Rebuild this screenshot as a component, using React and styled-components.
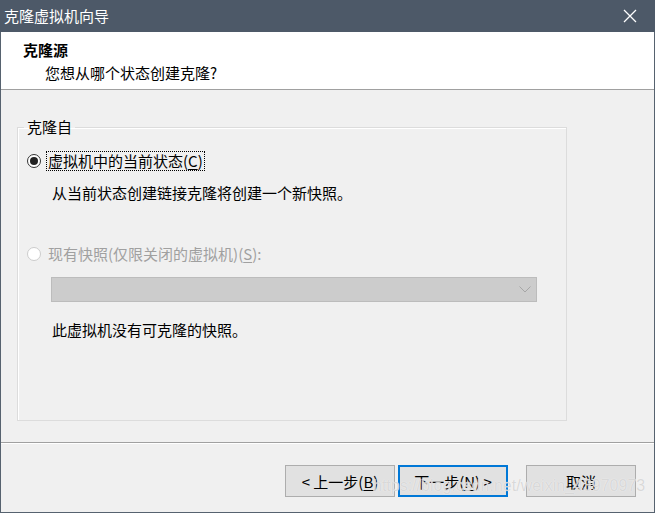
import React from "react"
import styled, { createGlobalStyle } from "styled-components"

const GlobalStyle = createGlobalStyle`
    html, body {
        margin: 0;
        padding: 0;
        background: #f0f0f0;
    }
    * {
        box-sizing: border-box;
    }
`

const CloneWizard = () => {
    return (
        <Window>
            <GlobalStyle />
            <TitleBar>
                <span>克隆虚拟机向导</span>
                <Close>
                    <svg width="14" height="14" viewBox="0 0 14 14">
                        <path d="M1 1 L13 13 M13 1 L1 13" stroke="#fff" strokeWidth="1.3" />
                    </svg>
                </Close>
            </TitleBar>
            <Header>
                <HeaderTitle>克隆源</HeaderTitle>
                <HeaderSub>您想从哪个状态创建克隆?</HeaderSub>
            </Header>
            <Body>
                <GroupBox>
                    <Legend>克隆自</Legend>
                    <RadioRow $top={14}>
                        <Radio $checked />
                        <RadioLabel $focused>
                            虚拟机中的当前状态(<u>C</u>)
                        </RadioLabel>
                    </RadioRow>
                    <Note $top={12}>从当前状态创建链接克隆将创建一个新快照。</Note>
                    <RadioRow $top={41}>
                        <Radio $disabled />
                        <RadioLabel $disabled>
                            现有快照(仅限关闭的虚拟机)(<u>S</u>):
                        </RadioLabel>
                    </RadioRow>
                    <Select>
                        <svg width="12" height="7" viewBox="0 0 12 7">
                            <path d="M0.5 0.5 L6 6 L11.5 0.5" stroke="#a6a6a6" strokeWidth="1" fill="none" />
                        </svg>
                    </Select>
                    <Note $top={18}>此虚拟机没有可克隆的快照。</Note>
                </GroupBox>
            </Body>
            <Footer>
                <Buttons>
                    <Button>&lt; 上一步(<u>B</u>)</Button>
                    <Button $primary>下一步(<u>N</u>) &gt;</Button>
                    <Button $gap={15}>取消</Button>
                </Buttons>
                <Watermark>https://blog.csdn.net/weixin_43970973</Watermark>
            </Footer>
        </Window>
    )
}
export default CloneWizard

const Window = styled.div`
    width: 100%;
    height: 100vh;
    display: flex;
    flex-direction: column;
    border: 1px solid #56626f;
    border-top: none;
    background: #f0f0f0;
    font-family: "Noto Sans CJK SC", "Liberation Sans", sans-serif;
    font-size: 15px;
    color: #000;
`
const TitleBar = styled.div`
    height: 32px;
    flex-shrink: 0;
    margin: 0 -1px;
    background: #4d5968;
    color: #fff;
    font-size: 15px;
    display: flex;
    align-items: center;
    justify-content: space-between;
    padding-left: 4px;

    span {
        position: relative;
        top: -1px;
    }
`
const Close = styled.div`
    width: 46px;
    height: 32px;
    display: flex;
    align-items: center;
    justify-content: center;
    margin-right: 2px;
`
const Header = styled.div`
    height: 58px;
    flex-shrink: 0;
    background: #fff;
    border-bottom: 1px solid #a0a0a0;
    padding: 8px 0 0 22px;
    display: flex;
    flex-direction: column;
`
const HeaderTitle = styled.div`
    font-weight: bold;
    font-size: 15px;
    line-height: 20px;
`
const HeaderSub = styled.div`
    margin-left: 22px;
    line-height: 20px;
    margin-top: 3px;
`
const Body = styled.div`
    flex: 1;
    padding: 27px 0 21px 16px;
    display: flex;
`
const GroupBox = styled.fieldset`
    margin: 0;
    width: 550px;
    padding: 0 9px;
    border: 1px solid #dcdcdc;
    box-shadow: inset 1px 1px 0 #fff;
    display: flex;
    flex-direction: column;
    min-width: 0;
`
const Legend = styled.legend`
    padding: 0 3px;
    margin-left: -3px;
    line-height: 20px;
    color: #000;
`
const RadioRow = styled.div`
    margin-top: ${p => p.$top}px;
    display: flex;
    align-items: center;
    height: 20px;
`
const Radio = styled.span`
    width: 14px;
    height: 14px;
    border-radius: 50%;
    border: 1px solid ${p => (p.$disabled ? "#cccccc" : "#333")};
    background: #fff;
    position: relative;
    flex-shrink: 0;

    &::after {
        content: "";
        display: ${p => (p.$checked ? "block" : "none")};
        position: absolute;
        left: 2px;
        top: 2px;
        width: 8px;
        height: 8px;
        border-radius: 50%;
        background: #222;
    }
`
const RadioLabel = styled.span`
    margin-left: 5px;
    padding: 0 1px;
    line-height: 18px;
    border: 1px dotted ${p => (p.$focused ? "#000" : "transparent")};
    color: ${p => (p.$disabled ? "#a0a0a0" : "#000")};

    u {
        text-underline-offset: 2px;
    }
`
const Note = styled.div`
    margin-top: ${p => p.$top}px;
    margin-left: 25px;
    line-height: 20px;
`
const Select = styled.div`
    margin: 13px 0 0 24px;
    width: 486px;
    height: 25px;
    background: #cccccc;
    border: 1px solid #bcbcbc;
    display: flex;
    align-items: center;
    justify-content: flex-end;
    padding-right: 5px;
`
const Footer = styled.div`
    height: 70px;
    flex-shrink: 0;
    border-top: 1px solid #a0a0a0;
    box-shadow: inset 0 1px 0 #fff;
    position: relative;
`
const Buttons = styled.div`
    display: flex;
    justify-content: flex-end;
    padding: 22px 18px 0 0;
    gap: 3px;
`
const Button = styled.button`
    width: 110px;
    height: 32px;
    margin-left: ${p => p.$gap || 0}px;
    background: #e1e1e1;
    border: ${p => (p.$primary ? "2px solid #0078d7" : "1px solid #adadad")};
    font-family: inherit;
    font-size: 15px;
    color: #000;
    padding: 0;
    display: flex;
    align-items: center;
    justify-content: center;

    u {
        text-underline-offset: 2px;
    }
`
const Watermark = styled.div`
    position: absolute;
    left: 372px;
    top: 34px;
    font-family: "Liberation Sans", sans-serif;
    font-size: 16px;
    color: rgba(205, 205, 205, 0.75);
    text-shadow: 0 0 1px #fff;
    pointer-events: none;
    white-space: nowrap;
`
